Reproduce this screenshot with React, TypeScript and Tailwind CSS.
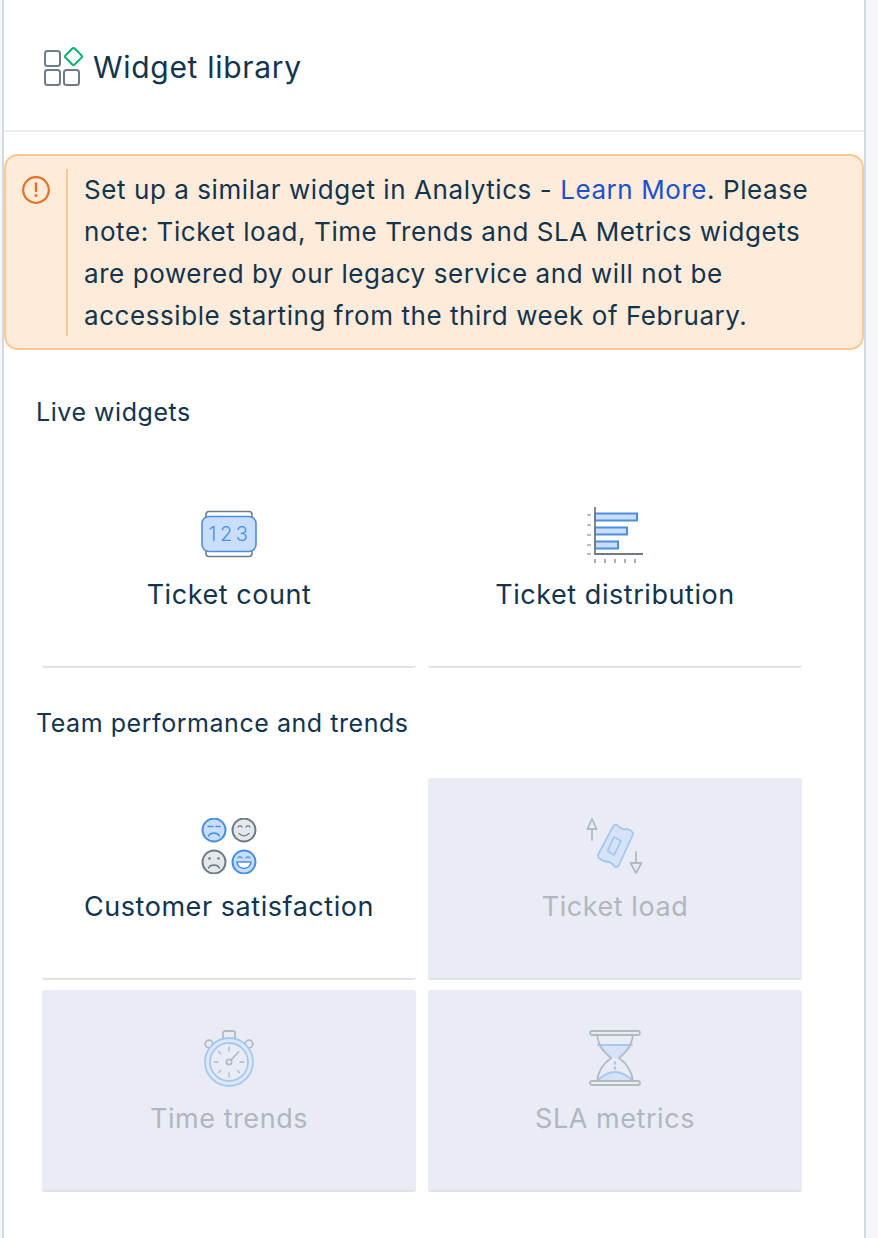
const font = { fontFamily: "Inter, sans-serif" };

const LibraryIcon = () => (
  <svg width="42" height="42" viewBox="0 0 42 42" fill="none" strokeWidth="2">
    <rect x="2" y="7" width="15" height="15" rx="2.5" stroke="#6f7c87" />
    <rect x="2" y="26" width="15" height="15" rx="2.5" stroke="#6f7c87" />
    <rect x="21" y="26" width="15" height="15" rx="2.5" stroke="#6f7c87" />
    <rect x="24" y="6" width="13" height="13" rx="2" transform="rotate(45 30.5 12.5)" stroke="#00b36b" />
  </svg>
);

const WarnIcon = () => (
  <svg width="28" height="28" viewBox="0 0 28 28" fill="none">
    <circle cx="14" cy="14" r="12.8" stroke="#e86f25" strokeWidth="2.2" />
    <path d="M14 7.5v7.5" stroke="#e86f25" strokeWidth="2.4" strokeLinecap="round" />
    <circle cx="14" cy="19.500" r="1.500" fill="#e86f25" />
  </svg>
);

const CountIcon = () => (
  <svg width="56" height="48" viewBox="0 0 56 48" fill="none">
    <path d="M5 7V4.500a3 3 0 0 1 3-3h40a3 3 0 0 1 3 3V7M5 41v2.500a3 3 0 0 0 3 3h40a3 3 0 0 0 3-3V41" stroke="#6f7c87" strokeWidth="1.6" />
    <rect x="1" y="6.500" width="54" height="35" rx="7" fill="#c9defa" stroke="#4a90e2" strokeWidth="1.6" />
    <text x="29" y="31" textAnchor="middle" fontSize="20" letterSpacing="3.500" fill="#4a90e2" fontFamily="Inter, sans-serif" fontWeight="300">
      123
    </text>
  </svg>
);

const BarsIcon = () => (
  <svg width="60" height="58" viewBox="0 0 60 58" fill="none">
    <rect x="10" y="8.500" width="42" height="7" fill="#c9defa" stroke="#4a90e2" strokeWidth="2" />
    <rect x="10" y="22.500" width="32" height="7" fill="#c9defa" stroke="#4a90e2" strokeWidth="2" />
    <rect x="10" y="36.500" width="23" height="7" fill="#c9defa" stroke="#4a90e2" strokeWidth="2" />
    <path d="M10 2v47h48" stroke="#6f7c87" strokeWidth="1.800" />
    <path d="M2 10h4M2 20h4M2 30h4M2 40h4M2 49h4M10 54v4M20 54v4M30 54v4M40 54v4M50 54v4" stroke="#6f7c87" strokeWidth="1.200" />
  </svg>
);

const SatisfactionIcon = () => (
  <svg width="58" height="56" viewBox="0 0 58 56" fill="none" strokeLinecap="round">
    <circle cx="14" cy="12" r="11.500" fill="#c9defa" stroke="#4a90e2" strokeWidth="2" />
    <path d="M8 8.500h5M16 8.500h4M8.500 18c2-4 9-4 11 0" stroke="#4a90e2" strokeWidth="1.500" />
    <circle cx="44" cy="12" r="11.500" fill="#e4e8ea" stroke="#6f7c87" strokeWidth="2" />
    <path d="M38 9c1-1.500 3-1.500 4 0M46 9c1-1.500 3-1.500 4 0M39 15.500c3 3 7 3 10 0" stroke="#6f7c87" strokeWidth="1.300" />
    <circle cx="14" cy="44" r="11.500" fill="#e4e8ea" stroke="#6f7c87" strokeWidth="2" />
    <circle cx="9.500" cy="40.500" r="1.300" fill="#6f7c87" />
    <circle cx="18.500" cy="40.500" r="1.300" fill="#6f7c87" />
    <path d="M8.500 50c2-4 9-4 11 0" stroke="#6f7c87" strokeWidth="1.500" />
    <circle cx="44" cy="44" r="11.500" fill="#c9defa" stroke="#4a90e2" strokeWidth="2" />
    <path d="M38 40c1-1.500 3-1.500 4 0M46 40c1-1.500 3-1.500 4 0" stroke="#4a90e2" strokeWidth="1.300" />
    <path d="M37 44h14c0 8.500-14 8.500-14 0z" fill="#fff" stroke="#4a90e2" strokeWidth="1.500" />
  </svg>
);

const TicketIcon = () => (
  <svg width="58" height="58" viewBox="0 0 58 58" fill="none" strokeLinecap="round" strokeLinejoin="round">
    <path d="M6 12v11M6 2l-4.500 10h9z" stroke="#b4b9c0" strokeWidth="1.800" />
    <path d="M50 35v11M50 56l-5.500-10h11z" stroke="#b4b9c0" strokeWidth="1.800" />
    <path
      d="M27 9.500c1.200-2 3-2.500 4.500-1 2 2.500 5 4 8 3.500 2-.3 2.800.3 5 1.500 2.500 1.200 3 3 2 5L33 48c-1 2-2.800 2.500-4.500 1.500-2-3-5.500-5-8.500-5-1.500 0-4.500-1.500-6.500-3-1.800-1-2-2.500-1-4.500z"
      fill="#d6e3f6"
      stroke="#a5c8f0"
      strokeWidth="1.800"
    />
    <path d="M28 20l7 4-7 14-6.500-4z" stroke="#a5c8f0" strokeWidth="1.800" />
  </svg>
);

const TimerIcon = () => (
  <svg width="52" height="58" viewBox="0 0 52 58" fill="none" strokeLinecap="round">
    <path d="M20 9V4a2 2 0 0 1 2-2h8a2 2 0 0 1 2 2v5" fill="#e9ecf5" stroke="#b4b9c0" strokeWidth="1.800" />
    <circle cx="6" cy="15" r="3.800" stroke="#b4b9c0" strokeWidth="1.800" />
    <circle cx="46" cy="15" r="3.800" stroke="#b4b9c0" strokeWidth="1.800" />
    <circle cx="26" cy="33" r="24" fill="#e1e8f5" stroke="#a5c8f0" strokeWidth="1.800" />
    <circle cx="26" cy="33" r="19" fill="#e9ecf5" stroke="#a5c8f0" strokeWidth="1.800" />
    <path d="M26 18v4M26 44v4M11 33h4M37 33h4M15.500 22.500l2 2M36.500 43.500l-2-2M15.500 43.500l2-2" stroke="#b4b9c0" strokeWidth="1.400" />
    <circle cx="26" cy="33" r="2.600" stroke="#b4b9c0" strokeWidth="1.800" />
    <path d="M28 31l7.500-8" stroke="#b4b9c0" strokeWidth="1.800" />
  </svg>
);

const HourglassIcon = () => (
  <svg width="52" height="58" viewBox="0 0 52 58" fill="none" strokeLinecap="round">
    <path d="M9 16h34c-2 6-9 10-14 13h-6C18 26 11 22 9 16z" fill="#d6e3f6" />
    <path d="M7 53c6-7 14-10 19-10s13 3 19 10z" fill="#d6e3f6" />
    <path d="M9 16h34" stroke="#a5c8f0" strokeWidth="1.800" />
    <path d="M7 53c6-7 14-10 19-10s13 3 19 10" stroke="#a5c8f0" strokeWidth="1.800" />
    <path d="M8 5c1 12 7 18 14 24-7 5-13 12-14 24M44 5c-1 12-7 18-14 24 7 5 13 12 14 24" stroke="#b4b9c0" strokeWidth="1.800" />
    <rect x="1" y="2" width="50" height="4" rx="2" fill="#e9ecf5" stroke="#b4b9c0" strokeWidth="1.800" />
    <rect x="1" y="52" width="50" height="4" rx="2" fill="#e9ecf5" stroke="#b4b9c0" strokeWidth="1.800" />
    <path d="M26 33.500v1M26 38.500v1" stroke="#a5c8f0" strokeWidth="2.500" />
  </svg>
);

type WidgetCardProps = { icon: React.ReactNode; label: string; disabled?: boolean };

const WidgetCard = ({ icon, label, disabled }: WidgetCardProps) => (
  <div
    className={`h-[202px] rounded-[3px] flex flex-col items-center pt-[38px] border-b-2 border-[#dfe3e8] ${
      disabled ? "bg-[#e9ecf5]" : "bg-white"
    }`}
  >
    <div className="h-[60px] flex items-center justify-center">{icon}</div>
    <div
      className={`mt-[13px] text-[27px] leading-[36px] tracking-[0.55px] ${
        disabled ? "text-[#b1b6be]" : "text-[#12344d]"
      }`}
    >
      {label}
    </div>
  </div>
);

export default function App() {
  return (
    <div className="w-[878px] h-[1238px] bg-[#f5f7f9] overflow-hidden text-[#12344d]" style={font}>
      <div className="ml-[2px] w-[864px] h-full bg-white border-x-2 border-[#d3dae3]">
        <div className="h-[130px] flex items-center pl-[39px] gap-[8px] border-b-2 border-[#ebeff3] box-content">
          <LibraryIcon />
          <h1 className="text-[30px] leading-[40px] tracking-[0.7px] mt-[4px]">Widget library</h1>
        </div>

        <div className="mt-[22px] h-[196px] rounded-[14px] bg-[#feebd9] border-2 border-[#fdc88f] flex pt-[13px] pl-[16px]">
          <div className="pt-[7px] w-[30px]">
            <WarnIcon />
          </div>
          <div className="ml-[14px] h-[167px] border-l-2 border-[#fdc88f] pl-[16px] text-[26px] leading-[42px] tracking-[0.57px]">
            Set up a similar widget in Analytics - <span className="text-[#1a52cc]">Learn More</span>. Please
            <br />
            note: Ticket load, Time Trends and SLA Metrics widgets
            <br />
            are powered by our legacy service and will not be
            <br />
            accessible starting from the third week of February.
          </div>
        </div>

        <h2 className="mt-[46px] ml-[32px] text-[25px] leading-[32px] tracking-[0.55px]">Live widgets</h2>
        <div className="mt-[38px] ml-[38px] w-[760px] grid grid-cols-2 gap-x-[12px]">
          <WidgetCard icon={<CountIcon />} label="Ticket count" />
          <WidgetCard icon={<BarsIcon />} label="Ticket distribution" />
        </div>

        <h2 className="mt-[39px] ml-[32px] text-[25px] leading-[32px] tracking-[0.55px]">
          Team performance and trends
        </h2>
        <div className="mt-[39px] ml-[38px] w-[760px] grid grid-cols-2 gap-x-[12px] gap-y-[10px]">
          <WidgetCard icon={<SatisfactionIcon />} label="Customer satisfaction" />
          <WidgetCard icon={<TicketIcon />} label="Ticket load" disabled />
          <WidgetCard icon={<TimerIcon />} label="Time trends" disabled />
          <WidgetCard icon={<HourglassIcon />} label="SLA metrics" disabled />
        </div>
      </div>
    </div>
  );
}
